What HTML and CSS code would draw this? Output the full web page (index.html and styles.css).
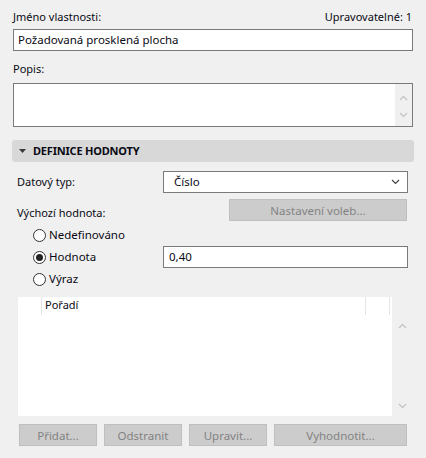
FILE: index.html
```html
<!DOCTYPE html>
<html lang="cs">
<head>
    <meta charset="UTF-8">
    <meta name="viewport" content="width=device-width, initial-scale=1.0">
    <title>Vlastnost</title>
    <link rel="stylesheet" href="styles.css">
</head>
<body>
    <div class="panel">
        <!-- Name of the property -->
        <div class="top-row">
            <span>Jméno vlastnosti:</span>
            <span class="editable">Upravovatelné: 1</span>
        </div>
        <div class="field">Požadovaná prosklená plocha</div>

        <!-- Description -->
        <div class="label popis">Popis:</div>
        <div class="textarea">
            <div class="vscroll">
                <svg width="9" height="6" viewBox="0 0 9 6"><path d="M1 5 L4.5 1.5 L8 5" fill="none" stroke="#c6c6c6" stroke-width="1.4"/></svg>
                <svg width="9" height="6" viewBox="0 0 9 6"><path d="M1 1 L4.5 4.5 L8 1" fill="none" stroke="#c6c6c6" stroke-width="1.4"/></svg>
            </div>
        </div>

        <!-- Value definition section -->
        <div class="section-head">
            <svg width="7" height="4" viewBox="0 0 7 4"><path d="M0 0 H7 L3.5 4 Z" fill="#3a3a3a"/></svg>
            <span>DEFINICE HODNOTY</span>
        </div>

        <div class="form-row type-row">
            <span class="row-label">Datový typ:</span>
            <div class="select">
                <span>Číslo</span>
                <svg width="9" height="6" viewBox="0 0 9 6"><path d="M1 1 L4.5 4.5 L8 1" fill="none" stroke="#444" stroke-width="1.2"/></svg>
            </div>
        </div>

        <div class="form-row default-row">
            <span class="row-label default-label">Výchozí hodnota:</span>
            <button class="btn options-btn" disabled>Nastavení voleb...</button>
        </div>

        <div class="radio-row">
            <span class="radio"></span>
            <span>Nedefinováno</span>
        </div>
        <div class="radio-row">
            <span class="radio checked"></span>
            <span>Hodnota</span>
            <div class="field value-field">0,40</div>
        </div>
        <div class="radio-row">
            <span class="radio"></span>
            <span>Výraz</span>
        </div>

        <!-- Option list -->
        <div class="list-wrap">
            <div class="list">
                <div class="list-head">
                    <div class="col col-first"></div>
                    <div class="col col-name">Pořadí</div>
                    <div class="col col-last"></div>
                </div>
            </div>
            <div class="list-scroll">
                <svg width="9" height="6" viewBox="0 0 9 6"><path d="M1 5 L4.5 1.5 L8 5" fill="none" stroke="#c6c6c6" stroke-width="1.4"/></svg>
                <svg width="9" height="6" viewBox="0 0 9 6"><path d="M1 1 L4.5 4.5 L8 1" fill="none" stroke="#c6c6c6" stroke-width="1.4"/></svg>
            </div>
        </div>

        <div class="actions">
            <button class="btn" disabled>Přidat...</button>
            <button class="btn" disabled>Odstranit</button>
            <button class="btn" disabled>Upravit...</button>
            <button class="btn wide" disabled>Vyhodnotit...</button>
        </div>
    </div>
</body>
</html>
```

FILE: styles.css
```css
/* Basic reset */
* {
    margin: 0;
    padding: 0;
    box-sizing: border-box;
}

body {
    font-family: "Noto Sans", "Open Sans", sans-serif;
    font-size: 11px;
    line-height: 16px;
    color: #0a0a14;
    background-color: #f0f0f0;
}

.panel {
    width: 426px;
    height: 458px;
    padding: 9px 13px 0 13px;
}

.top-row {
    display: flex;
    justify-content: space-between;
    height: 16px;
}

.editable {
    margin-right: 1px;
}

.field {
    height: 22px;
    margin-top: 4px;
    padding: 0 4px;
    line-height: 20px;
    font-size: 11.5px;
    background-color: #fff;
    border: 1px solid #7a7a7a;
}

.label.popis {
    margin-top: 10px;
}

.textarea {
    display: flex;
    justify-content: flex-end;
    height: 44px;
    margin-top: 6px;
    background-color: #fff;
    border: 1px solid #7a7a7a;
}

.vscroll,
.list-scroll {
    display: flex;
    flex-direction: column;
    justify-content: space-between;
    align-items: center;
    background-color: #f0f0f0;
}

.vscroll {
    width: 17px;
    padding: 11px 0 8px;
}

/* Collapsible section header */
.section-head {
    display: flex;
    align-items: center;
    height: 22px;
    margin: 13px -1px 0;
    padding-left: 7px;
    background-color: #d8d8d8;
    border-radius: 3px;
    font-weight: bold;
    letter-spacing: -0.2px;
}

.section-head svg {
    margin-right: 7px;
}

.form-row {
    display: flex;
    justify-content: space-between;
    align-items: center;
    height: 22px;
}

.row-label {
    padding-left: 4px;
}

.type-row {
    margin-top: 9px;
}

.select {
    display: flex;
    justify-content: space-between;
    align-items: center;
    width: 245px;
    height: 22px;
    margin-right: 5px;
    padding: 0 7px 0 10px;
    font-size: 11.5px;
    background-color: #fff;
    border: 1px solid #7a7a7a;
}

.default-row {
    margin-top: 6px;
}

.default-label {
    position: relative;
    top: 3px;
}

.btn {
    height: 22px;
    font-family: inherit;
    font-size: 11.5px;
    color: #838383;
    background-color: #cccccc;
    border: 1px solid #bfbfbf;
}

.options-btn {
    width: 178px;
    margin-right: 6px;
}

/* Radio buttons */
.radio-row {
    display: flex;
    align-items: center;
    height: 22px;
    padding-left: 20px;
    font-size: 11.5px;
}

.default-row + .radio-row {
    margin-top: 3px;
}

.radio {
    width: 13px;
    height: 13px;
    margin-right: 3px;
    background-color: #fff;
    border: 1px solid #333;
    border-radius: 50%;
    display: flex;
    align-items: center;
    justify-content: center;
}

.radio.checked::after {
    content: "";
    width: 7px;
    height: 7px;
    border-radius: 50%;
    background-color: #222;
}

.value-field {
    width: 245px;
    margin: -1px 5px 0 auto;
    padding-left: 5px;
}

/* List of options */
.list-wrap {
    display: flex;
    height: 119px;
    margin-top: 7px;
    margin-left: 5px;
}

.list {
    width: 374px;
    background-color: #fff;
}

.list-head {
    display: flex;
    height: 18px;
}

.col {
    height: 18px;
    line-height: 16px;
}

.col-first {
    width: 24px;
    border-right: 1px solid #e5e5e5;
}

.col-name {
    width: 324px;
    padding-left: 3px;
    border-right: 1px solid #e5e5e5;
}

.col-last {
    width: 24px;
    border-right: 1px solid #e5e5e5;
}

.list-scroll {
    width: 20px;
    padding: 26px 0 7px;
}

.actions {
    display: flex;
    gap: 7px;
    margin-top: 8px;
    margin-left: 6px;
}

.actions .btn {
    width: 78px;
}

.actions .btn.wide {
    width: 133px;
}
```
